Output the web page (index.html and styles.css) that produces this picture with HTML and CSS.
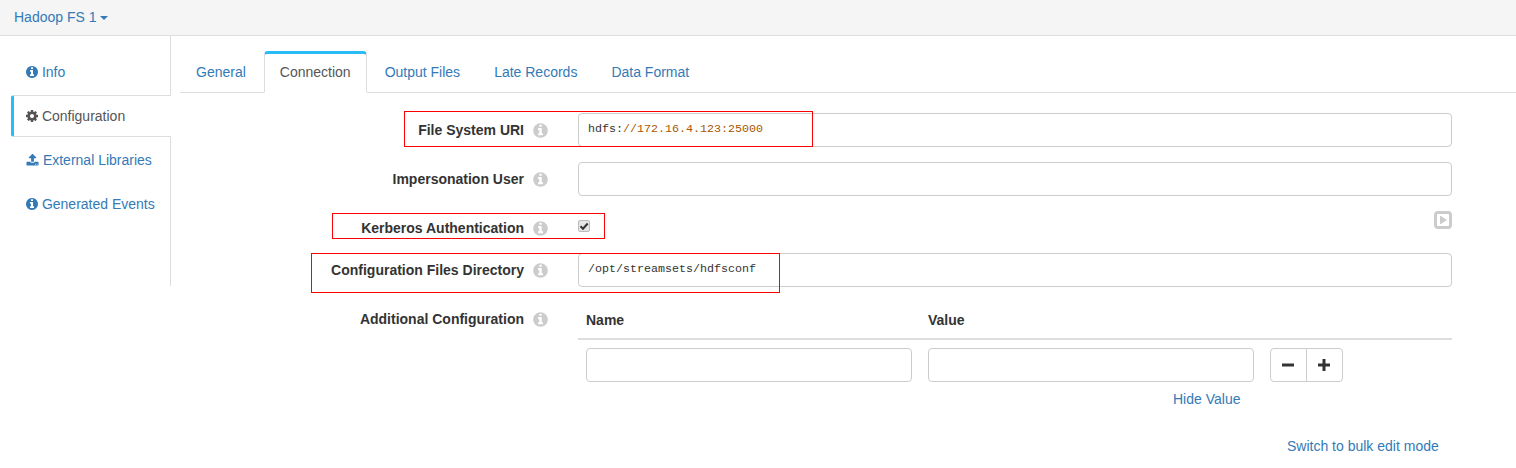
FILE: index.html
```html
<!DOCTYPE html>
<html lang="en">
<head>
<meta charset="UTF-8">
<title>Hadoop FS 1</title>
<link rel="stylesheet" href="styles.css">
</head>
<body>
  <svg class="defs" width="0" height="0">
    <symbol id="i-info" viewBox="0 0 1536 1792"><path d="M1024 1376v-160q0-14-9-23t-23-9h-96v-512q0-14-9-23t-23-9h-320q-14 0-23 9t-9 23v160q0 14 9 23t23 9h96v320h-96q-14 0-23 9t-9 23v160q0 14 9 23t23 9h448q14 0 23-9t9-23zm-128-896v-160q0-14-9-23t-23-9h-192q-14 0-23 9t-9 23v160q0 14 9 23t23 9h192q14 0 23-9t9-23zm640 416q0 209-103 385.500t-279.500 279.500-385.500 103-385.500-103-279.500-279.500-103-385.500 103-385.500 279.500-279.500 385.500-103 385.500 103 279.500 279.500 103 385.500z"/></symbol>
    <symbol id="i-cog" viewBox="0 0 1536 1792"><path d="M1024 896q0-106-75-181t-181-75-181 75-75 181 75 181 181 75 181-75 75-181zm512-109v222q0 12-8 23t-20 13l-185 28q-19 54-39 91 35 50 107 138 10 12 10 25t-9 23q-27 37-99 108t-94 71q-12 0-26-9l-138-108q-44 23-91 38-16 136-29 186-7 28-36 28h-222q-14 0-24.500-8.500t-11.500-21.500l-28-184q-49-16-90-37l-141 107q-10 9-25 9-14 0-25-11-126-114-165-168-7-10-7-23 0-12 8-23 15-21 51-66.500t54-70.500q-27-50-41-99l-183-27q-13-2-21-12.500t-8-23.500v-222q0-12 8-23t19-13l186-28q14-46 39-92-40-57-107-138-10-12-10-24 0-10 9-23 26-36 98.500-107.500t94.500-71.500q13 0 26 10l138 107q44-23 91-38 16-136 29-186 7-28 36-28h222q14 0 24.500 8.500t11.500 21.500l28 184q49 16 90 37l142-107q9-9 24-9 13 0 25 10 129 119 165 170 7 8 7 22 0 12-8 23-15 21-51 66.500t-54 70.500q26 50 41 98l183 28q13 2 21 12.500t8 23.500z"/></symbol>
    <symbol id="i-upload" viewBox="0 0 1792 1792"><path d="M1344 1472q0-26-19-45t-45-19-45 19-19 45 19 45 45 19 45-19 19-45zm256 0q0-26-19-45t-45-19-45 19-19 45 19 45 45 19 45-19 19-45zm128-224v320q0 40-28 68t-68 28h-1472q-40 0-68-28t-28-68v-320q0-40 28-68t68-28h427q21 56 70.500 92t110.500 36h256q61 0 110.500-36t70.500-92h427q40 0 68 28t28 68zm-325-648q-17 40-59 40h-256v448q0 26-19 45t-45 19h-256q-26 0-45-19t-19-45v-448h-256q-42 0-59-40-17-39 14-69l448-448q18-19 45-19t45 19l448 448q31 30 14 69z"/></symbol>
  </svg>

  <div class="topbar">
    <a class="stage-name">Hadoop FS 1 <span class="caret"></span></a>
  </div>

  <div class="detail">
    <ul class="side-nav">
      <li><a><svg class="icon"><use href="#i-info"/></svg> Info</a></li>
      <li class="active"><a><svg class="icon"><use href="#i-cog"/></svg> Configuration</a></li>
      <li><a><svg class="icon icon-upload"><use href="#i-upload"/></svg> External Libraries</a></li>
      <li><a><svg class="icon"><use href="#i-info"/></svg> Generated Events</a></li>
    </ul>

    <div class="content">
      <ul class="tabs">
        <li><a>General</a></li>
        <li class="active"><a>Connection</a></li>
        <li><a>Output Files</a></li>
        <li><a>Late Records</a></li>
        <li><a>Data Format</a></li>
      </ul>

      <div class="form">
        <div class="row">
          <label class="field-label">File System URI <svg class="help"><use href="#i-info"/></svg></label>
          <div class="field">
            <div class="code-input">hdfs:<span class="code-str">//172.16.4.123:25000</span></div>
          </div>
          <div class="mark mark-uri"></div>
        </div>

        <div class="row">
          <label class="field-label">Impersonation User <svg class="help"><use href="#i-info"/></svg></label>
          <div class="field"><div class="code-input"></div></div>
        </div>

        <div class="row row-check">
          <label class="field-label">Kerberos Authentication <svg class="help"><use href="#i-info"/></svg></label>
          <div class="field">
            <span class="check"><svg viewBox="0 0 12 12" width="12" height="12"><path d="M2.500 6.200 5 8.700 9.700 3.500" fill="none" stroke="#333" stroke-width="2"/></svg></span>
            <svg class="run" viewBox="0 0 18 18" width="18" height="18"><rect x="1.500" y="1.500" width="15" height="15" rx="2.500" fill="none" stroke="#ccc" stroke-width="3"/><path d="M6 4.500v9l7-4.500z" fill="#ccc"/></svg>
          </div>
          <div class="mark mark-kerberos"></div>
        </div>

        <div class="row">
          <label class="field-label">Configuration Files Directory <svg class="help"><use href="#i-info"/></svg></label>
          <div class="field">
            <div class="code-input">/opt/streamsets/hdfsconf</div>
          </div>
          <div class="mark mark-dir"></div>
        </div>

        <div class="row">
          <label class="field-label field-label-table">Additional Configuration <svg class="help"><use href="#i-info"/></svg></label>
          <div class="field">
            <div class="map-head">
              <span class="map-col">Name</span>
              <span class="map-col">Value</span>
            </div>
            <div class="map-row">
              <div class="map-col"><input class="text-input" type="text"></div>
              <div class="map-col"><input class="text-input" type="text"></div>
              <div class="btn-group">
                <button class="btn" type="button"><svg viewBox="0 0 12 12" width="12" height="12"><rect x="0" y="4.500" width="12" height="3"/></svg></button>
                <button class="btn" type="button"><svg viewBox="0 0 12 12" width="12" height="12"><path d="M4.500 0h3v4.500H12v3H7.500V12h-3V7.500H0v-3h4.500z"/></svg></button>
              </div>
            </div>
            <div class="hide-value"><a>Hide Value</a></div>
            <div class="bulk"><a>Switch to bulk edit mode</a></div>
          </div>
        </div>
      </div>
    </div>
  </div>
</body>
</html>
```

FILE: styles.css
```css
body {
  margin: 0;
  font-family: "Liberation Sans", Arial, sans-serif;
  font-size: 14px;
  line-height: 20px;
  color: #333;
  background-color: #fff;
  overflow: hidden;
}

a {
  color: #337ab7;
  text-decoration: none;
}

ul {
  list-style: none;
  margin: 0;
  padding: 0;
}

.defs {
  position: absolute;
}

.topbar {
  height: 35px;
  padding-left: 14px;
  line-height: 35px;
  background-color: #f5f5f5;
  border-bottom: 1px solid #ddd;
}

.caret {
  display: inline-block;
  vertical-align: middle;
  border-top: 4px solid #337ab7;
  border-left: 4px solid transparent;
  border-right: 4px solid transparent;
}

.detail {
  display: flex;
  align-items: flex-start;
}

/* left nav */
.side-nav {
  height: 250px;
  padding: 14px 0 0 11px;
  box-sizing: border-box;
  flex: none;
  width: 171px;
  border-right: 1px solid #ddd;
}

.side-nav li {
  height: 44px;
  line-height: 44px;
  padding-left: 15px;
  box-sizing: border-box;
}

.side-nav .active {
  height: 42px;
  margin: 1px -1px 1px 0;
  line-height: 40px;
  background-color: #fff;
  border: 1px solid #ddd;
  border-left: 3px solid #29bcf5;
  border-right: 0;
  border-radius: 3px 0 0 3px;
  padding-left: 12px;
}

.side-nav .active a {
  color: #555;
}

.icon {
  width: 12px;
  height: 14px;
  fill: #337ab7;
  vertical-align: -2px;
}

.icon-upload {
  width: 13px;
}

.side-nav .active .icon {
  fill: #555;
}

.content {
  flex: 1;
  padding-left: 9px;
}

/* tabs */
.tabs {
  display: flex;
  height: 41px;
  margin-top: 15px;
  border-bottom: 1px solid #ddd;
}

.tabs li {
  padding: 0 16px;
  margin-right: 2px;
  line-height: 42px;
}

.tabs .active {
  box-sizing: border-box;
  height: 42px;
  padding: 0 15px;
  line-height: 37px;
  background-color: #fff;
  border: 1px solid #ddd;
  border-top: 3px solid #29bcf5;
  border-bottom-color: #fff;
  border-radius: 4px 4px 0 0;
}

.tabs .active a {
  color: #555;
}

/* form */
.form {
  margin-top: 20px;
}

.row {
  position: relative;
  display: flex;
  margin-bottom: 15px;
}

.row-check {
  height: 27px;
}

.field-label {
  width: 368px;
  margin-right: 30px;
  flex: none;
  display: flex;
  justify-content: flex-end;
  align-items: center;
  height: 34px;
  font-weight: bold;
}

.help {
  width: 15px;
  height: 17px;
  margin-left: 9px;
  fill: #ccc;
}

.field {
  position: relative;
  width: 874px;
  flex: none;
}

.code-input {
  height: 34px;
  padding-left: 9px;
  box-sizing: border-box;
  border: 1px solid #ccc;
  border-radius: 4px;
  font-family: "Liberation Mono", monospace;
  font-size: 11.67px;
  line-height: 30px;
  color: #333;
}

.code-str {
  color: #a50;
}

.check {
  display: block;
  width: 12px;
  height: 12px;
  margin-top: 9px;
  background-color: #e6e6e6;
  border: 1px solid #bbb;
  border-radius: 2px;
  box-sizing: border-box;
}

.check svg {
  display: block;
  margin: -1px;
}

.run {
  position: absolute;
  right: 0;
  top: 0;
}

.map-head {
  display: flex;
  height: 38px;
  line-height: 36px;
  padding-left: 8px;
  font-weight: bold;
  border-bottom: 2px solid #ddd;
  box-sizing: border-box;
  gap: 16px;
}

.map-col {
  width: 326px;
}

.map-row {
  display: flex;
  gap: 16px;
  padding: 8px 0 0 8px;
}

.text-input {
  display: block;
  width: 100%;
  height: 34px;
  box-sizing: border-box;
  border: 1px solid #ccc;
  border-radius: 4px;
  background-color: #fff;
}

.btn-group {
  display: flex;
}

.btn {
  width: 37px;
  height: 34px;
  padding: 0 1px 0 0;
  background-color: #fff;
  border: 1px solid #ccc;
  border-radius: 4px 0 0 4px;
  fill: #333;
}

.btn svg {
  display: block;
  margin: 0 auto;
}

.btn + .btn {
  margin-left: -1px;
  border-radius: 0 4px 4px 0;
}

.hide-value {
  margin-top: 7px;
  padding-left: 595px;
}

.bulk {
  margin-top: 27px;
  padding-left: 709px;
}

/* red boxes drawn over the screenshot */
.mark {
  position: absolute;
  border: 1px solid #f00;
  box-sizing: border-box;
  pointer-events: none;
}

.mark-uri {
  left: 224px;
  top: -2px;
  width: 409px;
  height: 36px;
}

.mark-kerberos {
  left: 152px;
  top: 2px;
  width: 273px;
  height: 26px;
}

.mark-dir {
  left: 131px;
  top: 0;
  width: 469px;
  height: 40px;
}
```
